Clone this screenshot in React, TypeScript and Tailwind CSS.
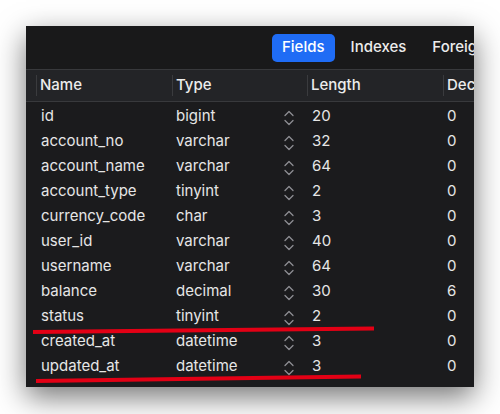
import React from "react";

const rows: [string, string, string, string][] = [
  ["id", "bigint", "20", "0"],
  ["account_no", "varchar", "32", "0"],
  ["account_name", "varchar", "64", "0"],
  ["account_type", "tinyint", "2", "0"],
  ["currency_code", "char", "3", "0"],
  ["user_id", "varchar", "40", "0"],
  ["username", "varchar", "64", "0"],
  ["balance", "decimal", "30", "6"],
  ["status", "tinyint", "2", "0"],
  ["created_at", "datetime", "3", "0"],
  ["updated_at", "datetime", "3", "0"],
];

function UpDown() {
  return (
    <svg width="10" height="16" viewBox="0 0 10 16" fill="none" stroke="#8e8e93" strokeWidth="1.3" strokeLinecap="round" strokeLinejoin="round">
      <path d="M1 5.5 L5 1.5 L9 5.5" />
      <path d="M1 10.5 L5 14.5 L9 10.5" />
    </svg>
  );
}

function HeadCell({ label, className }: { label: string; className: string }) {
  return (
    <div className={`flex items-center h-full shrink-0 ${className}`}>
      <div className="h-[21px] border-l border-[#3a3b3e]" />
      <span className="pl-[3px] text-[15px] font-medium text-[#ececec]">{label}</span>
    </div>
  );
}

export default function App() {
  return (
    <div className="relative w-[500px] h-[414px] bg-white overflow-hidden pt-[26px] pl-[26px]" style={{ fontFamily: "Inter, 'Noto Sans', sans-serif" }}>
      <div className="w-[448px] h-[361px] bg-[#1b1b1d] shadow-[0_10px_28px_rgba(0,0,0,0.55)] overflow-hidden flex flex-col">
        <div className="h-[43px] bg-[#19191a] flex items-center pl-[246px] gap-[6px] whitespace-nowrap shrink-0">
          <div className="h-[28px] px-[10px] rounded-[5px] bg-[#1f6cf5] flex items-center text-[15px] font-medium text-white shrink-0">Fields</div>
          <div className="h-[28px] px-[10px] flex items-center text-[15px] font-medium text-[#ececec] shrink-0">Indexes</div>
          <div className="h-[28px] px-[10px] flex items-center text-[15px] font-medium text-[#ececec] shrink-0">Foreign Keys</div>
        </div>
        <div className="h-[33px] bg-[#232427] border-y border-[#38393c] flex items-center pl-[10px] whitespace-nowrap shrink-0">
          <HeadCell label="Name" className="w-[136px]" />
          <HeadCell label="Type" className="w-[135px]" />
          <HeadCell label="Length" className="w-[136px]" />
          <HeadCell label="Decimals" className="w-[120px]" />
        </div>
        <div className="flex flex-col pt-[2px]">
          {rows.map(([n, t, l, d]) => (
            <div key={n} className="h-[25px] flex items-center pl-[10px] text-[15px] text-[#e6e6e6] whitespace-nowrap">
              <div className="w-[136px] shrink-0 pl-[5px]">{n}</div>
              <div className="w-[135px] shrink-0 pl-[4px] pr-[13px] flex items-center justify-between">
                <span>{t}</span>
                <span className="pt-[3px]"><UpDown /></span>
              </div>
              <div className="w-[136px] shrink-0 pl-[5px]">{l}</div>
              <div className="flex-1 pl-[4px]">{d}</div>
            </div>
          ))}
        </div>
      </div>
      <svg className="absolute left-0 top-0 pointer-events-none" width="500" height="414">
        <line x1="33" y1="332" x2="374" y2="328.5" stroke="#e30015" strokeWidth="4" />
        <line x1="36" y1="381" x2="361" y2="376.5" stroke="#e30015" strokeWidth="4" />
      </svg>
    </div>
  );
}
